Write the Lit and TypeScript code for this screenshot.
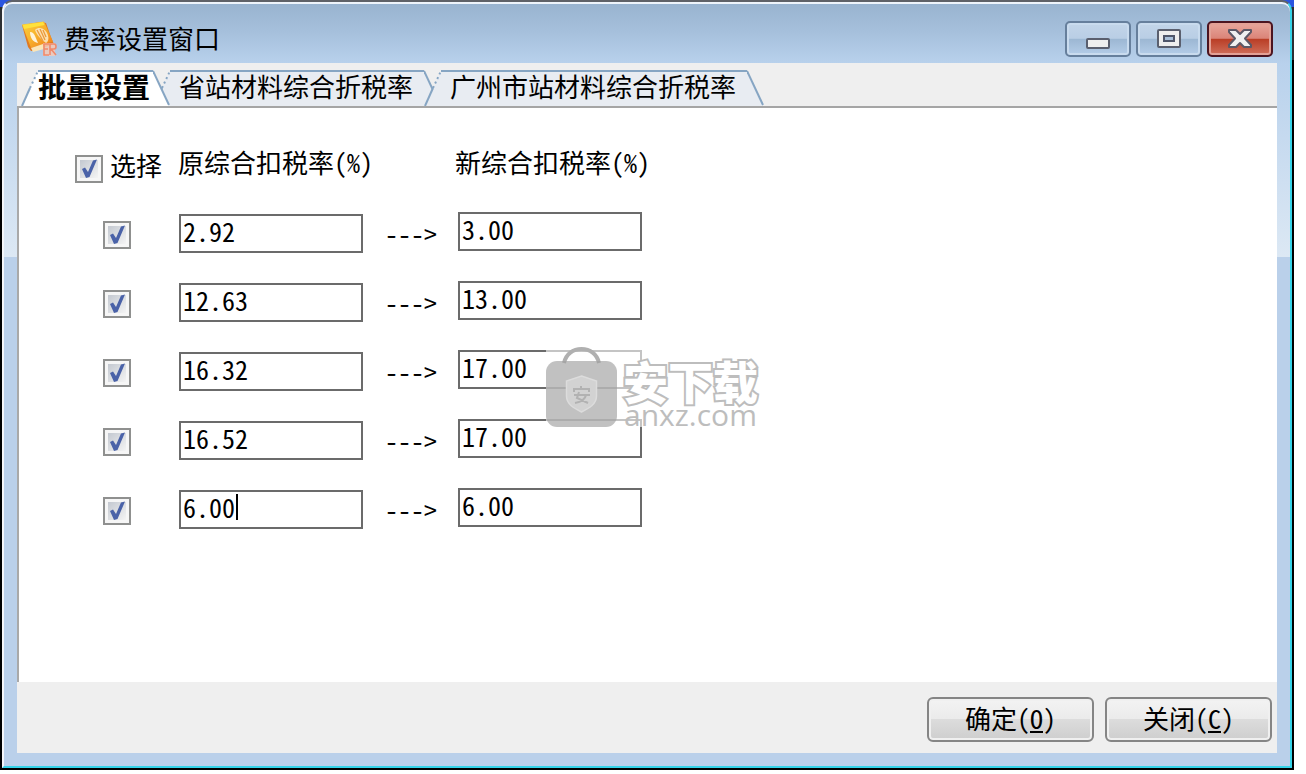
import { LitElement, html, css, svg } from "lit";
import { customElement, state } from "lit/decorators.js";
import { classMap } from "lit/directives/class-map.js";

interface Rate {
  from: string;
  to: string;
  caret?: boolean;
}

const TABS = ["批量设置", "省站材料综合折税率", "广州市站材料综合折税率"];

const RATES: Rate[] = [
  { from: "2.92", to: "3.00" },
  { from: "12.63", to: "13.00" },
  { from: "16.32", to: "17.00" },
  { from: "16.52", to: "17.00" },
  { from: "6.00", to: "6.00", caret: true },
];

const appIcon = svg`
  <svg class="app-icon" viewBox="0 0 36 36" aria-hidden="true">
    <defs>
      <linearGradient id="tile" x1="0" y1="0" x2="1" y2="1">
        <stop offset="0" stop-color="#fbd23c" />
        <stop offset="0.5" stop-color="#f7b02c" />
        <stop offset="1" stop-color="#ef7a1a" />
      </linearGradient>
    </defs>
    <path d="M0 4 L6 26 L9 30 L15 29 L32 23 L30 19 L24 2 L19 1z" fill="#e07a22" />
    <path d="M0 3.500 L22 0.500 L31 20.500 L9 27z" fill="url(#tile)" />
    <path d="M1 4 L21 1 L22.500 4 L2 8z" fill="#ffe23c" />
    <path d="M8 11c3 0 4 2 5 4l3 7c-5-1-8-5-8-11z" fill="#fff3d8" />
    <path d="M13 9c4-4 10-1 12 3s2 8-1 10c-3-2-9-7-11-13z" fill="#fbe0b0" />
    <path d="M15 9l6 11M18 8l5 11M21 9l3 7" stroke="#eb9a3c" stroke-width="1.300" fill="none" />
    <path d="M9 27l12-4 1 5-11 3z" fill="#fbe6b8" />
    <path d="M21 22h12v13H21z" fill="#f8c9b4" opacity="0.8" />
    <path d="M27 23h-5v11h5M22 28h4M28 34V23h4a2 2.500 0 0 1 0 5h-3l5 6" fill="none" stroke="#f08a6c" stroke-width="1.600" />
  </svg>
`;

@customElement("app-root")
export class AppRoot extends LitElement {
  @state() private active = 0;
  @state() private checked = RATES.map(() => true);

  static styles = css`
    :host {
      display: flex;
      flex-direction: column;
      box-sizing: border-box;
      min-height: 100vh;
      padding: 0 12px 4px 0;
      position: relative;
      background: #fff;
      color: #000;
      font-family: "Noto Sans CJK SC", sans-serif;
      font-size: 26px;
      line-height: 30px;
      font-feature-settings: "hwid";
    }
    button,
    input {
      font: inherit;
      font-feature-settings: inherit;
      color: inherit;
      margin: 0;
      box-sizing: border-box;
    }
    .desktop {
      flex: 1;
      display: flex;
      background: linear-gradient(#2a55e0 0 7px, #2c2f33 7px 60px, #000 60px);
    }
    .window {
      flex: 1;
      display: flex;
      flex-direction: column;
      margin: 0 2px 2px 2px;
      border: 2px solid #35d3e8;
      border-top-color: #5f6268;
      border-left-color: #f4f6f9;
      border-radius: 10px 10px 0 0;
      box-shadow: inset 0 2px 0 #eef4fb;
      background:
        linear-gradient(#98b3cf, #a6c0dc 50%, #b8d1ec) top / 100% 61px no-repeat,
        linear-gradient(#b8d1ec, #dce8f4) 0 61px / 100% 194px no-repeat,
        #bad0ea;
      overflow: hidden;
    }
    .titlebar {
      display: flex;
      align-items: center;
      padding: 12px 17px 0 18px;
      height: 49px;
      gap: 6px;
    }
    .app-icon {
      width: 36px;
      height: 36px;
    }
    .title {
      flex: 1;
      margin: 0;
      padding-bottom: 2px;
      font-size: 26px;
      font-weight: 400;
    }
    .caption {
      display: flex;
      gap: 5px;
    }
    .cap {
      width: 66px;
      height: 36px;
      padding: 0;
      display: grid;
      place-items: center;
      border: 2px solid #667f9c;
      border-radius: 5px;
      background: linear-gradient(#c3d5e9, #b9cee5 48%, #9cb7d3 50%, #b4cde8);
      box-shadow: inset 0 0 0 2px #c9dbee;
    }
    .cap.close {
      border-color: #4c1420;
      background: linear-gradient(#e7a79d, #db8478 48%, #b93d25 50%, #d0705c);
      box-shadow: inset 0 0 0 2px #e3a196;
    }
    .cap svg {
      width: 28px;
      height: 24px;
    }
    .client {
      flex: 1;
      display: flex;
      flex-direction: column;
      margin: 0 13px 13px;
      background: #efefef;
    }
    .tabs {
      display: flex;
      padding: 7px 0 0 21px;
      height: 36px;
      border-bottom: 2px solid #a5a5a5;
    }
    .tab {
      display: flex;
      padding: 0;
      border: 0;
      background: none;
      height: 36px;
      margin-left: -17px;
    }
    .tab.active {
      z-index: 1;
      font-size: 28px;
      font-weight: 700;
    }
    .slant {
      width: 17px;
      height: 36px;
      flex: none;
    }
    .face {
      fill: #e8ecf2;
    }
    .active .face {
      fill: #fff;
    }
    .edge {
      fill: none;
      stroke: #86a5c3;
      stroke-width: 2;
    }
    .dots {
      stroke-dasharray: 2 3;
    }
    .tab-label {
      box-sizing: border-box;
      height: 36px;
      padding: 0 11px 0 9px;
      border-top: 2px solid #86a5c3;
      background: #e8ecf2;
      line-height: 28px;
      white-space: nowrap;
    }
    .active .tab-label {
      background: #fff;
      padding: 0 3px 0 0;
    }
    .panel {
      flex: 1;
      padding: 39px 16px 32px 56px;
      border-left: 2px solid #a9a9a9;
      background: #fff;
    }
    .head {
      display: grid;
      grid-template-columns: 103px 277px auto;
      justify-content: start;
      white-space: nowrap;
      height: 36px;
      margin-bottom: 29px;
    }
    .all {
      display: flex;
      align-items: center;
      gap: 7px;
    }
    .check {
      appearance: none;
      width: 28px;
      height: 28px;
      align-self: end;
      border: 2px solid #8f908f;
      background: linear-gradient(135deg, #c3c8d0, #f4f4f4) center / 18px 18px no-repeat #f6f6f6;
    }
    .check:checked {
      background:
        url("data:image/svg+xml,%3Csvg xmlns='http://www.w3.org/2000/svg' viewBox='0 0 24 24'%3E%3Cpath d='M5 12l3-1.500 3 4.500 5-11.500 4-1-7.500 17.500-3.500 1z' fill='%234a62a8'/%3E%3C/svg%3E") center / 24px 24px no-repeat,
        linear-gradient(135deg, #c3c8d0, #f4f4f4) center / 18px 18px no-repeat #f6f6f6;
    }
    .rates {
      display: grid;
      gap: 28px;
      margin: 0;
      padding: 0;
      list-style: none;
    }
    .rate {
      display: grid;
      grid-template-columns: 76px 184px 95px 184px;
      align-items: center;
      padding-left: 28px;
      height: 41px;
    }
    .rate .check {
      margin-bottom: 4px;
    }
    .field {
      position: relative;
      align-self: end;
      height: 39px;
    }
    .field.new {
      align-self: start;
    }
    .box {
      display: block;
      width: 100%;
      height: 39px;
      padding: 0 2px 7px;
      border: 2px solid #6b6b6b;
      border-radius: 0;
      background: #fff;
      outline: 0;
    }
    .caret {
      position: absolute;
      left: 57px;
      top: 4px;
      width: 2px;
      height: 26px;
      background: #000;
    }
    .arrow {
      padding-left: 22px;
    }
    .footer {
      display: flex;
      justify-content: flex-end;
      gap: 11px;
      padding: 15px 5px 11px;
    }
    .push {
      width: 167px;
      height: 45px;
      padding: 0 0 4px;
      border: 2px solid #858585;
      border-radius: 6px;
      background: linear-gradient(#f3f3f3, #ebebeb 48%, #dcdcdc 50%, #cecece);
      box-shadow: inset 0 0 0 2px #f0f0f0;
    }
    .push u {
      text-decoration-thickness: 2px;
      text-underline-offset: 2px;
    }
    .mark {
      position: absolute;
      left: 50%;
      top: 50%;
      transform: translate(-50%, -50%);
      display: flex;
      gap: 6px;
      width: 214px;
      height: 80px;
      background: rgba(255, 255, 255, 0.6);
      color: #bdbdbd;
      pointer-events: none;
    }
    .bag {
      width: 71px;
      height: 80px;
      flex: none;
    }
    .mark-text {
      display: flex;
      flex-direction: column;
      font-feature-settings: normal;
      white-space: nowrap;
    }
    .mark-cn {
      font-size: 45px;
      line-height: 44px;
      font-weight: 900;
      color: #fff;
      -webkit-text-stroke: 4px #bdbdbd;
      paint-order: stroke fill;
      padding-top: 12px;
    }
    .mark-en {
      padding-left: 1px;
      font-family: "Open Sans", sans-serif;
      font-size: 30px;
      line-height: 24px;
      font-weight: 500;
    }
  `;

  private toggleAll(e: Event) {
    const on = (e.target as HTMLInputElement).checked;
    this.checked = this.checked.map(() => on);
  }

  private toggle(i: number) {
    this.checked = this.checked.map((v, n) => (n === i ? !v : v));
  }

  private tab(label: string, i: number) {
    const active = i === this.active;
    return html`
      <button class=${classMap({ tab: true, active })} role="tab" aria-selected=${active} @click=${() => (this.active = i)}>
        <svg class="slant" viewBox="0 0 17 36" aria-hidden="true">
          <path class="face" d="M1 36L17 1V36z" />
          <path class="edge" d="M1 36L9 18" />
          <path class="edge dots" d="M9 18L17 1" />
        </svg>
        <span class="tab-label">${label}</span>
        <svg class="slant" viewBox="0 0 17 36" aria-hidden="true">
          <path class="face" d="M0 1L16 35V36H0z" />
          <path class="edge" d="M0 1L16 35" />
        </svg>
      </button>
    `;
  }

  private rate(r: Rate, i: number) {
    return html`
      <li class="rate">
        <input class="check" type="checkbox" aria-label="选择" .checked=${this.checked[i]} @change=${() => this.toggle(i)} />
        <div class="field">
          <input class="box" type="text" aria-labelledby="old-rate" .value=${r.from} />
          ${r.caret ? html`<span class="caret"></span>` : null}
        </div>
        <span class="arrow">---&gt;</span>
        <div class="field new">
          <input class="box" type="text" aria-labelledby="new-rate" .value=${r.to} />
        </div>
      </li>
    `;
  }

  render() {
    return html`
      <div class="desktop">
        <main class="window">
          <header class="titlebar">
            ${appIcon}
            <h1 class="title">费率设置窗口</h1>
            <div class="caption">
              <button class="cap" aria-label="最小化">
                <svg viewBox="0 0 28 24"><rect x="3" y="12" width="22" height="9" rx="1" fill="#eee" stroke="#5a5f6e" stroke-width="2" /></svg>
              </button>
              <button class="cap" aria-label="最大化">
                <svg viewBox="0 0 28 24">
                  <rect x="3" y="3" width="22" height="17" rx="1" fill="#eee" stroke="#5a5f6e" stroke-width="2" />
                  <rect x="9" y="9" width="10" height="5" fill="#a9c0da" stroke="#4f566a" stroke-width="2" />
                </svg>
              </button>
              <button class="cap close" aria-label="关闭">
                <svg viewBox="0 0 28 24">
                  <path d="M3 3h7l4 4 4-4h7v2l-6 6.500 6 6.500v2h-7l-4-4-4 4H3v-2l6-6.500-6-6.500z" fill="#f0f0f0" stroke="#5c5866" stroke-width="2" stroke-linejoin="round" />
                </svg>
              </button>
            </div>
          </header>
          <section class="client">
            <div class="tabs" role="tablist">${TABS.map((t, i) => this.tab(t, i))}</div>
            <div class="panel">
              <div class="head">
                <label class="all">
                  <input class="check" type="checkbox" .checked=${this.checked.every(Boolean)} @change=${this.toggleAll} />
                  <span>选择</span>
                </label>
                <span id="old-rate">原综合扣税率(%)</span>
                <span id="new-rate">新综合扣税率(%)</span>
              </div>
              <ul class="rates">
                ${RATES.map((r, i) => this.rate(r, i))}
              </ul>
            </div>
            <footer class="footer">
              <button class="push" accesskey="o">确定(<u>O</u>)</button>
              <button class="push" accesskey="c">关闭(<u>C</u>)</button>
            </footer>
          </section>
        </main>
      </div>
      <div class="mark">
        <svg class="bag" viewBox="0 0 71 80" aria-hidden="true">
          <path d="M18 16c2-9 9-14 17.500-14S51 7 53 16" fill="none" stroke="#b0b0b0" stroke-width="4" />
          <rect x="0" y="14" width="71" height="66" rx="11" fill="#a0a0a0" opacity="0.65" />
          <path d="M35.500 29l15 5v15c0 8-7 12-15 16-8-4-15-8-15-16V34z" fill="#d2d2d2" stroke="#dcdcdc" stroke-width="1.500" />
          <g fill="none" stroke="#b2b2b2" stroke-width="2">
            <path d="M35 39v3M28 45v-3h15v3M28 48h16M33 45l-2 6 11 5M40 48c-1 5-5 7-11 8" />
          </g>
        </svg>
        <div class="mark-text">
          <span class="mark-cn">安下载</span>
          <span class="mark-en">anxz.com</span>
        </div>
      </div>
    `;
  }
}
